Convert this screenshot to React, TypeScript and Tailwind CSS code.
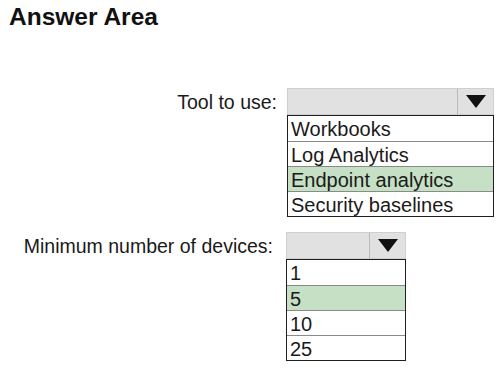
import React from "react";

type DropProps = {
  width: string;
  items: string[];
  selected: number;
};

function Caret() {
  return (
    <svg width="20" height="13" viewBox="0 0 20 13">
      <polygon points="0,0 20,0 10,13" fill="#111" />
    </svg>
  );
}

function Dropdown({ width, items, selected }: DropProps) {
  return (
    <div className={`flex flex-col ${width}`}>
      <div className="flex h-[27px] border border-[#cfcfcf] bg-[#e1e1e1]">
        <div className="flex-1" />
        <div className="flex w-[36px] items-center justify-center border-l border-[#b9b9b9]">
          <Caret />
        </div>
      </div>
      <div className="border-[1.5px] border-[#1e1e1e] bg-white">
        {items.map((it, i) => (
          <div
            key={it}
            className={`h-[25px] pl-[3px] leading-[26px] text-[20px] text-[#1a1a1a] ${
              i > 0 ? "border-t border-[#8a8a8a]" : ""
            } ${i === selected ? "bg-[#c6e0c5]" : ""}`}
          >
            {it}
          </div>
        ))}
      </div>
    </div>
  );
}

export default function App() {
  return (
    <div
      className="h-[368px] w-[499px] bg-white text-[#1a1a1a]"
      style={{ fontFamily: '"Liberation Sans", Arial, sans-serif' }}
    >
      <h1 className="pl-[9px] pt-[3px] text-[24.5px] font-bold leading-[28px] text-[#111]">
        Answer Area
      </h1>

      <div className="mt-[57px] flex items-start">
        <div className="w-[278px] pr-[1px] text-right text-[19.5px] leading-[28px]">
          Tool to use:
        </div>
        <div className="ml-[9px]">
          <Dropdown
            width="w-[207px]"
            items={["Workbooks", "Log Analytics", "Endpoint analytics", "Security baselines"]}
            selected={2}
          />
        </div>
      </div>

      <div className="mt-[15px] flex items-start">
        <div className="w-[274px] pr-[1px] text-right text-[19.5px] leading-[28px]">
          Minimum number of devices:
        </div>
        <div className="ml-[12px]">
          <Dropdown width="w-[120px]" items={["1", "5", "10", "25"]} selected={1} />
        </div>
      </div>
    </div>
  );
}
